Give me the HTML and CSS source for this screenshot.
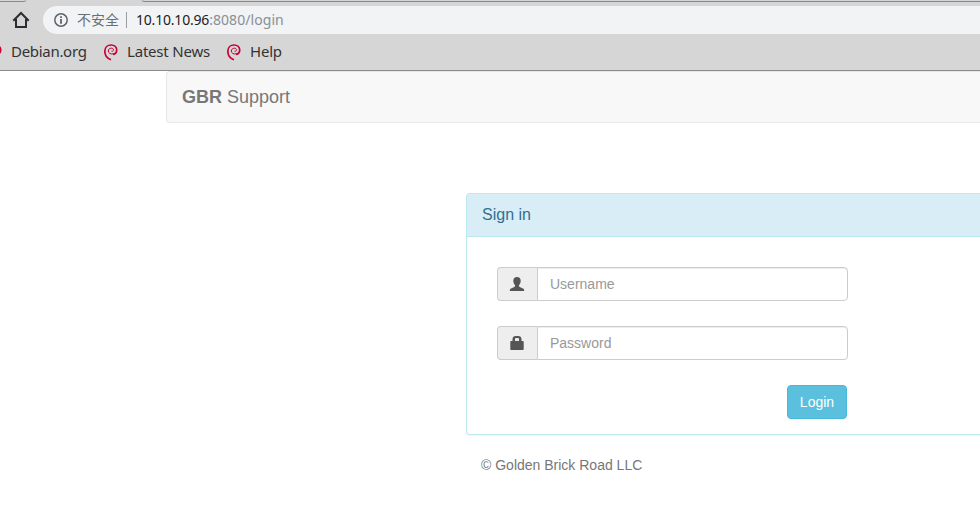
FILE: index.html
```html
<!DOCTYPE html>
<html lang="en">
<head>
<meta charset="utf-8">
<title>GBR Support</title>
<link rel="stylesheet" href="styles.css">
</head>
<body>
<svg width="0" height="0" class="defs">
  <symbol id="swirl" viewBox="0 0 16 18">
    <path d="M8 16.800C4.500 15.500 1.800 12 1.800 8.200C1.900 4.200 4.800 2 8 2C11.500 2 13.600 4.200 13.700 6.700C13.800 9.200 12.200 11 10 11.300" fill="none" stroke="#c70036" stroke-width="1.700"/>
    <path d="M10.500 10.800C7.500 11.500 5.300 10 5.300 8C5.300 6.200 6.800 5.200 8.300 5.200C9.800 5.200 10.600 6.100 10.500 7.100C10.300 8 9.500 8.500 8.500 8.200" fill="none" stroke="#c70036" stroke-width="1"/>
  </symbol>
</svg>
<header class="browser">
  <div class="tabs"><i class="tab-left"></i><i class="tab-right"></i></div>
  <div class="toolbar">
    <svg class="home" width="18" height="18" viewBox="0 0 18 18" fill="none" stroke="#2b2d30" stroke-width="2"><path d="M1.300 9.700L9 2L16.700 9.700M4 8V16H14V8"/></svg>
    <div class="address">
      <svg class="info" width="14" height="14" viewBox="0 0 14 14"><circle cx="7" cy="7" r="6.200" fill="none" stroke="#5f6368" stroke-width="1.500"/><path d="M6.100 3.200H7.900V4.900H6.100ZM6.100 6.100H7.900V10.800H6.100Z" fill="#5f6368"/></svg>
      <span class="warning">不安全</span>
      <i class="divider"></i>
      <span class="url">10.10.10.96<span class="path">:8080/login</span></span>
    </div>
  </div>
  <nav class="bookmarks">
    <span class="bookmark b1"><svg><use href="#swirl"/></svg><span>Debian.org</span></span>
    <span class="bookmark b2"><svg><use href="#swirl"/></svg><span>Latest News</span></span>
    <span class="bookmark b3"><svg><use href="#swirl"/></svg><span>Help</span></span>
  </nav>
</header>
<main class="container">
  <div class="navbar"><span><b>GBR</b> Support</span></div>
  <section class="panel">
    <h1 class="heading">Sign in</h1>
    <form class="body">
      <div class="group">
        <span class="addon user"><svg width="16" height="14" viewBox="0 0 16 14"><path d="M8 0C10.400 0 11.700 1.500 11.700 3.800C11.700 5.600 11 7.200 10 8.200V9.100C10 9.500 10.300 9.700 10.700 9.900L14 11.400C14.900 11.800 15.200 12.500 15.200 14H.8C.8 12.500 1.100 11.800 2 11.400L5.300 9.900C5.700 9.700 6 9.500 6 9.100V8.200C5 7.200 4.300 5.600 4.300 3.800C4.300 1.500 5.600 0 8 0Z"/></svg></span>
        <input type="text" placeholder="Username">
      </div>
      <div class="group">
        <span class="addon lock"><svg width="14" height="14" viewBox="0 0 14 14"><path fill-rule="evenodd" d="M2.500 5V3.200C2.500 1.200 3.800 0 5.800 0H8.200C10.200 0 11.500 1.200 11.500 3.200V5H12.700C13.300 5 13.700 5.400 13.700 6V13C13.700 13.600 13.300 14 12.700 14H1.300C.7 14 .3 13.600 .3 13V6C.3 5.400 .7 5 1.300 5ZM5 5H9V3.200C9 2.500 8.600 2 7.900 2H6.100C5.400 2 5 2.500 5 3.200Z"/></svg></span>
        <input type="password" placeholder="Password">
      </div>
      <button type="button">Login</button>
    </form>
  </section>
  <footer>© Golden Brick Road LLC</footer>
</main>
</body>
</html>
```
FILE: styles.css
```css
* { box-sizing: border-box; }
body { margin: 0; height: 529px; overflow: hidden; background: #fff; font: 14px/20px "Liberation Sans", Arial, sans-serif; color: #777; }
.defs { display: block; height: 0; }
.browser { height: 71px; background: #d6d6d6; border-bottom: 1px solid #8b8b8b; font-family: "Noto Sans", "Noto Sans CJK SC", sans-serif; overflow: hidden; }
.tabs { height: 6px; display: flex; justify-content: space-between; }
.tab-left { width: 26px; height: 2px; border-bottom: 1px solid #888; border-right: 1px solid #999; border-radius: 0 0 4px 0; }
.tab-right { width: 838px; height: 2px; border-bottom: 1px solid #888; border-left: 1px solid #999; border-radius: 0 0 0 4px; }
.toolbar { display: flex; height: 28px; align-items: center; }
.home { margin: 0 13px 0 12px; flex: none; }
.address { flex: 1; height: 28px; background: #f1f3f4; border-radius: 14px 0 0 14px; display: flex; align-items: center; padding-left: 11px; white-space: nowrap; }
.warning { margin: 0 0 2px 9px; width: 42px; color: #6b6f74; font: 14px/20px "Noto Sans CJK SC", sans-serif; }
.divider { width: 1px; height: 16px; background: #9b9da0; margin: 0 9px 0 7px; }
.url { color: #202124; font-size: 14px; letter-spacing: -.2px; }
.path { color: #8a8f94; letter-spacing: .07px; }
.bookmarks { height: 36px; display: flex; align-items: center; color: #333; font-size: 15px; }
.bookmark { display: flex; align-items: center; white-space: nowrap; flex: none; }
.bookmark svg { width: 16px; height: 18px; margin-right: 8px; }
.bookmark span { margin-bottom: 2px; letter-spacing: -.2px; }
.b1 { margin-left: -13px; width: 116px; }
.bookmark.b1 span { letter-spacing: -.3px; }
.b2 { width: 123px; }
.container { margin-left: 166px; }
.navbar { height: 52px; border: 1px solid #e7e7e7; border-right: 0; border-radius: 4px 0 0 4px; background: #f8f8f8; padding: 15px; font-size: 18px; line-height: 20px; }
.panel { height: 242px; margin: 70px 0 0 300px; border: 1px solid #bce8f1; border-right: 0; border-radius: 4px 0 0 4px; box-shadow: 0 1px 1px rgba(0,0,0,.05); }
.heading { height: 43px; margin: 0; padding: 12px 15px; font-size: 16px; line-height: 18px; font-weight: 400; color: #31708f; background: #d9edf7; border-bottom: 1px solid #bce8f1; border-radius: 3px 0 0 0; }
.body { width: 381px; padding: 30px 0 0 30px; }
.group { display: flex; height: 34px; margin-bottom: 25px; }
.addon { width: 40px; flex: none; display: flex; align-items: center; justify-content: center; background: #eee; border: 1px solid #ccc; border-right: 0; border-radius: 4px 0 0 4px; }
.addon svg { fill: #555; }
.user svg, .lock svg { margin-right: 1px; }
input { flex: 1; min-width: 0; height: 34px; border: 1px solid #ccc; border-radius: 0 4px 4px 0; padding: 6px 12px; font: 14px/20px "Liberation Sans", Arial, sans-serif; box-shadow: inset 0 1px 1px rgba(0,0,0,.075); }
input::placeholder { color: #999; opacity: 1; }
button { display: block; width: 60px; height: 34px; margin: 0 1px 0 auto; padding: 6px 0; border: 1px solid #46b8da; border-radius: 4px; background: #5bc0de; color: #fff; font: 14px/20px "Liberation Sans", Arial, sans-serif; }
footer { margin: 20px 0 0 315px; }
```
